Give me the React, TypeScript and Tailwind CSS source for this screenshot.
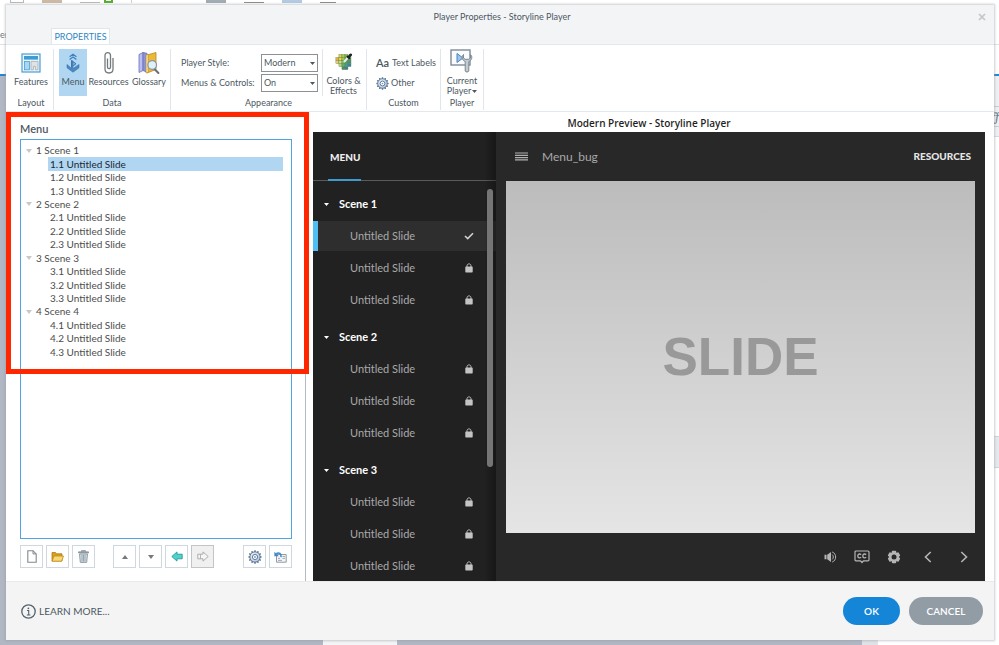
import type { ReactNode } from "react";

const UI = "font-[Lato,'Open_Sans',sans-serif]";

function Gear({ size, id }: { size: number; id: string }) {
  const teeth = Array.from({ length: 12 }, (_, i) => i * 30);
  return (
    <svg width={size} height={size} viewBox="0 0 24 24" aria-hidden="true">
      <defs>
        <linearGradient id={id} x1="0" y1="0" x2="1" y2="1">
          <stop offset="0" stopColor="#eef4fb" />
          <stop offset="1" stopColor="#a9c1de" />
        </linearGradient>
      </defs>
      {teeth.map((a) => (
        <rect key={a} x="10.6" y="0.6" width="2.8" height="4" rx="0.8" fill="#56708f" transform={`rotate(${a} 12 12)`} />
      ))}
      <circle cx="12" cy="12" r="8.8" fill={`url(#${id})`} stroke="#56708f" strokeWidth="1.5" />
      <circle cx="12" cy="12" r="4.4" fill="#fff" stroke="#56708f" strokeWidth="1.6" />
      <circle cx="12" cy="12" r="1.6" fill="#7b98bd" />
    </svg>
  );
}

function FeaturesIcon() {
  return (
    <svg width="20" height="20" viewBox="0 0 20 20" aria-hidden="true">
      <rect x="1" y="1" width="18" height="18" fill="#eaf5fc" stroke="#4a9fd2" strokeWidth="1.2" />
      <rect x="3" y="3" width="14" height="3.6" fill="#3f9bd0" />
      <rect x="3.4" y="8.4" width="5" height="8.4" fill="#a9d6f0" stroke="#4a9fd2" strokeWidth="0.8" />
      <path d="M10 8.4h7v8.4h-2.6v-3.4h-2v3.4H10z" fill="#dfe3e6" stroke="#a5adb3" strokeWidth="0.8" />
    </svg>
  );
}

function MenuIcon() {
  return (
    <svg width="14" height="20" viewBox="0 0 14 20" aria-hidden="true">
      <path d="M3.600 3.800L7 1.200l3.400 2.600M3.600 6.600L7 4l3.400 2.600" fill="none" stroke="#4181bd" strokeWidth="1.300" />
      <path d="M5.500 7.500l4.500 3.300-4.500 3.200z" fill="#8dbbe2" stroke="#3573ae" strokeWidth="1" />
      <path d="M1 11.500l4.500 3.800V8H7v7.500l6-4v3.300L7 19.200 1 14.800z" fill="#4c89c2" stroke="#3573ae" strokeWidth="0.600" />
    </svg>
  );
}

function ClipIcon() {
  return (
    <svg width="10" height="24" viewBox="0 0 10 24" aria-hidden="true">
      <path d="M3.500 7.500v8.500c0 2.200 3 2.200 3 0V4.500c0-3.900-5.500-3.900-5.500 0v13.500c0 5.300 8 5.300 8 0V7" fill="none" stroke="#737a7e" strokeWidth="1.300" />
    </svg>
  );
}

function GlossaryIcon() {
  return (
    <svg width="22" height="24" viewBox="0 0 22 24" aria-hidden="true">
      <path d="M1 3.500L5 1.500v18l-4 2z" fill="#b9bff0" stroke="#6a70b8" strokeWidth="0.8" />
      <path d="M5 1.500l4 .8v19l-4-1.800z" fill="#8b93dc" stroke="#6a70b8" strokeWidth="0.8" />
      <path d="M9 4l9-2.500v17L9 22z" fill="#e9b93a" stroke="#b5851c" strokeWidth="0.8" />
      <path d="M8 4l2.200-.6v18L8 22z" fill="#fbe6a0" stroke="#b5851c" strokeWidth="0.6" />
      <path d="M16 17.500l4.400 4.500" stroke="#6b6f76" strokeWidth="2" strokeLinecap="round" />
      <circle cx="14.200" cy="14" r="4.300" fill="#dff0fb" stroke="#8796a5" strokeWidth="1.200" />
    </svg>
  );
}

function ColorsIcon() {
  const cells = [
    ["", "#e9c93f", "#a8ca4a", "#7cb84a", ""],
    ["#edb23a", "#ead74c", "#9fc84f", "#5ca34a", "#4c9d62"],
    ["#f0c876", "#d9dc69", "#7fbf5a", "#4c9d62", "#3f8f86"],
    ["", "#b9d577", "#63ad6d", "#4a9a93", "#3e82a6"],
    ["", "", "#4a8d6a", "#3e7f9a", ""],
  ];
  return (
    <svg width="18" height="18" viewBox="0 0 18 18" aria-hidden="true">
      {cells.map((row, y) =>
        row.map((c, x) => (c ? <rect key={`${x}-${y}`} x={x * 3.2 + 0.4} y={y * 3.2 + 1.6} width="3.200" height="3.200" fill={c} stroke="#57804a" strokeWidth="0.400" /> : null)),
      )}
      <path d="M9 9.500l4.500-5" stroke="#e8edf0" strokeWidth="2.200" />
      <path d="M12 3.200l3.200 3" stroke="#222" strokeWidth="1.600" />
      <path d="M14 4.400l2-2.400" stroke="#222" strokeWidth="3" strokeLinecap="round" />
    </svg>
  );
}

function PlayerIcon() {
  return (
    <svg width="24" height="24" viewBox="0 0 24 24" aria-hidden="true">
      <rect x="1" y="1" width="19" height="15" fill="#fafbfc" stroke="#7e8c98" strokeWidth="1.400" />
      <path d="M7 4.500v9l6-4.500z" fill="#9cc3ea" stroke="#4b83bd" strokeWidth="1" />
      <path d="M13.500 5.500c-2.200 2-1.600 5.600 1.700 7v9.500c0 1.300 3.600 1.300 3.600 0V12.500c3.300-1.400 3.900-5 1.700-7v3.600l-1.700 1.200h-3.600l-1.700-1.200z" fill="#c3cbd2" stroke="#7b8893" strokeWidth="1" />
    </svg>
  );
}

function Caret({ className }: { className: string }) {
  return (
    <svg className={className} width="5" height="3" viewBox="0 0 5 3" aria-hidden="true">
      <path d="M0 0h5L2.500 3z" fill="currentColor" />
    </svg>
  );
}

function Lock() {
  return (
    <svg width="8" height="10" viewBox="0 0 8 10" aria-hidden="true">
      <path d="M2 4.500V2.700C2 .3 6 .3 6 2.700v1.800" fill="none" stroke="#bdbdbd" strokeWidth="1" />
      <rect x="0.300" y="3.600" width="7.400" height="6" rx="0.800" fill="#c4c4c4" />
    </svg>
  );
}

function Check() {
  return (
    <svg width="10" height="8" viewBox="0 0 10 8" aria-hidden="true">
      <path d="M1 4l2.700 2.600L9 1.200" fill="none" stroke="#d0d0d0" strokeWidth="1.600" />
    </svg>
  );
}

function Group({ label, className, children }: { label: string; className: string; children: ReactNode }) {
  return (
    <section className={`flex shrink-0 flex-col border-r border-[#e1e6ea] ${className}`}>
      <div className="flex h-[47px]">{children}</div>
      <div className="text-center leading-[14px]">{label}</div>
    </section>
  );
}

function RibbonButton({ icon, label, className }: { icon: ReactNode; label: string; className: string }) {
  return (
    <button type="button" className={`flex h-[47px] flex-col items-center pt-[2px] leading-[14px] ${className}`}>
      <span className="flex h-6 items-center">{icon}</span>
      <span className="whitespace-nowrap">{label}</span>
    </button>
  );
}

function Picker({ id, label, value, options }: { id: string; label: string; value: string; options: string[] }) {
  return (
    <div className="flex h-5 items-center">
      <label htmlFor={id} className="w-20 whitespace-nowrap">
        {label}
      </label>
      <div className="relative">
        <select id={id} defaultValue={value} className="block h-[18px] w-[57px] appearance-none border border-[#8b9196] bg-white pl-[2px] leading-4">
          {options.map((o) => (
            <option key={o}>{o}</option>
          ))}
        </select>
        <Caret className="pointer-events-none absolute top-2 right-[3px]" />
      </div>
    </div>
  );
}

function Ribbon() {
  return (
    <div className="flex h-[68px] border-y border-[#e3e8ec] bg-white pt-[4px] pb-px">
      <Group label="Layout" className="w-[48px] pl-[3px]">
        <RibbonButton icon={<FeaturesIcon />} label="Features" className="mx-auto w-[42px]" />
      </Group>
      <Group label="Data" className="w-[117px]">
        <RibbonButton icon={<MenuIcon />} label="Menu" className="ml-[5px] w-7 bg-[#b0d6f1]" />
        <RibbonButton icon={<ClipIcon />} label="Resources" className="w-[43px]" />
        <RibbonButton icon={<GlossaryIcon />} label="Glossary" className="w-[38px]" />
      </Group>
      <Group label="Appearance" className="w-[196px]">
        <div className="ml-[10px] flex flex-col pt-1">
          <Picker id="player-style" label="Player Style:" value="Modern" options={["Modern", "Classic"]} />
          <Picker id="menus-controls" label="Menus &amp; Controls:" value="On" options={["On", "Off"]} />
        </div>
        <button type="button" className="ml-1 flex w-[42px] flex-col items-center border-l border-[#e1e6ea] pt-1 leading-[10px]">
          <ColorsIcon />
          <span className="pt-[6px] whitespace-nowrap">
            Colors &amp;
            <br />
            Effects
          </span>
        </button>
      </Group>
      <Group label="Custom" className="w-[74px]">
        <div className="ml-[9px] flex flex-col pt-1">
          <button type="button" className="flex h-5 items-center gap-[3px] whitespace-nowrap">
            <span className="text-[11px] font-semibold">Aa</span>
            Text Labels
          </button>
          <button type="button" className="flex h-5 items-center gap-[2px]">
            <Gear size={13} id="gear-other" />
            Other
          </button>
        </div>
      </Group>
      <Group label="Player" className="w-[43px]">
        <button type="button" className="mx-auto flex flex-col items-center leading-[10px]">
          <PlayerIcon />
          <span className="pt-[3px]">
            Current
            <br />
            Player
            <Caret className="ml-px inline" />
          </span>
        </button>
      </Group>
    </div>
  );
}

const scenes = [1, 2, 3, 4];

function Tree() {
  return (
    <div className="min-h-0 flex-1 border border-[#4ea6dc] pt-[4px] pr-2 pl-[5px]">
      <ul className="grid h-[215px] auto-rows-fr text-[10px] text-[#4d4d4d]">
        {scenes.flatMap((s) => [
          <li key={s} className="flex items-center">
            <svg className="mr-1" width="6" height="4" viewBox="0 0 6 4" aria-hidden="true">
              <path d="M0 0h6L3 4z" fill="#c8c8c8" />
            </svg>
            {s} Scene {s}
          </li>,
          ...[1, 2, 3].map((n) => (
            <li key={`${s}.${n}`} className={s === 1 && n === 1 ? "ml-[22px] flex items-center bg-[#b0d6f1] pl-[2px] text-[#1c2733]" : "ml-[22px] flex items-center pl-[2px]"}>
              {s}.{n} Untitled Slide
            </li>
          )),
        ])}
      </ul>
    </div>
  );
}

function Tool({ label, disabled, children }: { label: string; disabled?: boolean; children: ReactNode }) {
  return (
    <button
      type="button"
      aria-label={label}
      disabled={disabled}
      className="flex size-[23px] items-center justify-center border border-[#cfd8de] bg-white disabled:border-[#c4c4c4] disabled:bg-[#f0f0f0]"
    >
      {children}
    </button>
  );
}

function Toolbar() {
  return (
    <div className="mt-[6px] flex gap-[3px]">
      <Tool label="New">
        <svg width="10" height="13" viewBox="0 0 10 13">
          <path d="M.8.700h5.200l3.200 3.200v8.400H.8z" fill="#fff" stroke="#83898d" strokeWidth="1.100" />
          <path d="M6 .7v3.200h3.200" fill="none" stroke="#83898d" strokeWidth="1" />
        </svg>
      </Tool>
      <Tool label="Open">
        <svg width="13" height="11" viewBox="0 0 13 11">
          <path d="M1 10V1.500h3.500l1 1.300H11V10z" fill="#d79f22" stroke="#b07b14" strokeWidth="0.800" />
          <path d="M1 10.200L3 5h9.500l-1.800 5.200z" fill="#f8d775" stroke="#c08c1d" strokeWidth="0.800" />
        </svg>
      </Tool>
      <Tool label="Delete">
        <svg width="11" height="13" viewBox="0 0 11 13">
          <path d="M.5 3V1.800h3V.600h4v1.200h3V3z" fill="#9aa6ae" stroke="#75828b" strokeWidth="0.600" />
          <path d="M1.500 4h8l-.8 8.400H2.300z" fill="#d5dee4" stroke="#87959e" strokeWidth="0.900" />
          <path d="M4 5v6.500M5.500 5v6.500M7 5v6.500" stroke="#8c99a2" strokeWidth="0.800" />
        </svg>
      </Tool>
      <div className="w-3" />
      <Tool label="Move up">
        <svg width="6" height="4" viewBox="0 0 6 4">
          <path d="M0 4h6L3 0z" fill="#77787a" />
        </svg>
      </Tool>
      <Tool label="Move down">
        <svg width="6" height="4" viewBox="0 0 6 4">
          <path d="M0 0h6L3 4z" fill="#77787a" />
        </svg>
      </Tool>
      <Tool label="Promote">
        <svg width="12" height="11" viewBox="0 0 12 11">
          <path d="M.8 5.500L6 .9v2.300h5.200v4.600H6v2.300z" fill="#4fd0cb" stroke="#259c9b" strokeWidth="0.900" />
        </svg>
      </Tool>
      <Tool label="Demote" disabled>
        <svg width="12" height="11" viewBox="0 0 12 11">
          <path d="M11.200 5.500L6 .9v2.300H.8v4.600H6v2.300z" fill="#f6f6f6" stroke="#a6a6a6" strokeWidth="0.900" />
          <path d="M3.500 3.200v4.600" stroke="#a6a6a6" strokeWidth="0.800" />
        </svg>
      </Tool>
      <div className="ml-auto flex gap-[3px]">
        <Tool label="Options">
          <Gear size={14} id="gear-tool" />
        </Tool>
        <Tool label="Reset from story">
          <svg width="13" height="12" viewBox="0 0 13 12">
            <path d="M2.500 3.500h9.700v7.700H2.500z" fill="#f3f5f7" stroke="#87919a" strokeWidth="0.900" />
            <path d="M4 9.400h4M8.500 5.500h2.500M8.500 7.400h2.500M4 7.400h2" stroke="#98a2aa" strokeWidth="0.900" />
            <path d="M7 6.200C7.600 2.600 5 1 2.200 2.600" fill="none" stroke="#3c86cc" strokeWidth="1.500" />
            <path d="M.4.700v4.500h4.400z" fill="#3c86cc" />
          </svg>
        </Tool>
      </div>
    </div>
  );
}

function PreviewMenu() {
  return (
    <aside className="relative flex w-[183px] shrink-0 flex-col overflow-hidden bg-[#212121]">
      <div className="h-[49px] shrink-0 border-b border-[#5a5a5a] pl-[15px]">
        <div className="h-[49px] w-[33px] border-b-2 border-[#3d9bd0] text-[10px] leading-[50px] font-black text-[#f0f0f0]">
          <span className="pl-[2px]">MENU</span>
        </div>
      </div>
      <div className="min-h-0 flex-1 overflow-hidden pt-[6px]">
        {[1, 2, 3].map((s) => (
          <section key={s} className="h-[133px]">
            <h3 className="flex h-[34px] items-center pl-[11px] text-[11px] font-bold text-white">
              <Caret className="mr-[10px]" />
              Scene {s}
            </h3>
            <div className="flex flex-col gap-[2px]">
              {[1, 2, 3].map((n) => {
                const on = s === 1 && n === 1;
                return (
                  <button
                    key={n}
                    type="button"
                    className={
                      on
                        ? "flex h-[30px] items-center justify-between border-l-[5px] border-[#4ebef5] bg-[#2e2e2e] pr-[22px] pl-8"
                        : "flex h-[30px] items-center justify-between pr-[23px] pl-[37px]"
                    }
                  >
                    <span className="text-[11px] text-[#a9a9a9]">Untitled Slide</span>
                    {on ? <Check /> : <Lock />}
                  </button>
                );
              })}
            </div>
          </section>
        ))}
      </div>
      <div className="pointer-events-none absolute inset-y-0 right-0 w-3 bg-linear-to-r from-transparent to-black/30" />
      <div className="absolute top-[57px] right-[3px] h-[278px] w-[6px] rounded-full bg-[#757575]" />
    </aside>
  );
}

function PlayerControls() {
  const c = "#b5b5b5";
  return (
    <div className="flex h-[48px] shrink-0 items-center justify-end pr-[3px]">
      <button type="button" aria-label="Volume" className="w-8">
        <svg width="13" height="12" viewBox="0 0 13 12" className="mx-auto">
          <path d="M.5 3.800h2v4.400h-2zM3.200 3.800L7 1v10L3.200 8.200z" fill={c} />
          <path d="M8.200 3.600c1.500 1.200 1.500 3.600 0 4.800M8.200 1c4.600 1.400 4.600 8.600 0 10" fill="none" stroke={c} strokeWidth="1" />
        </svg>
      </button>
      <button type="button" aria-label="Captions" className="w-8">
        <svg width="16" height="14" viewBox="0 0 16 14" className="mx-auto">
          <path d="M2 1h12q1 0 1 1v7.800q0 1-1 1H9.500L8 12.500l-1.500-1.700H2q-1 0-1-1V2q0-1 1-1z" fill="none" stroke={c} strokeWidth="1.200" />
          <path d="M7.200 4.600c-2-1.300-3.400-.3-3.400 1.300s1.400 2.600 3.400 1.300M12.200 4.600c-2-1.300-3.400-.3-3.400 1.300s1.400 2.600 3.400 1.300" fill="none" stroke={c} strokeWidth="1.300" />
        </svg>
      </button>
      <button type="button" aria-label="Settings" className="w-8">
        <svg width="14" height="14" viewBox="0 0 14 14" className="mx-auto">
          {[0, 60, 120].map((a) => (
            <rect key={a} x="4.800" y="0.800" width="4.400" height="12.400" rx="1" fill={c} transform={`rotate(${a} 7 7)`} />
          ))}
          <circle cx="7" cy="7" r="5" fill={c} />
          <circle cx="7" cy="7" r="2.500" fill="#282828" />
        </svg>
      </button>
      <button type="button" aria-label="Previous" className="w-[36px]">
        <svg width="8" height="12" viewBox="0 0 8 12" className="mx-auto">
          <path d="M6.700 1L1.500 6l5.200 5" fill="none" stroke={c} strokeWidth="1.600" />
        </svg>
      </button>
      <button type="button" aria-label="Next" className="w-[36px]">
        <svg width="8" height="12" viewBox="0 0 8 12" className="mx-auto">
          <path d="M1.300 1l5.200 5-5.200 5" fill="none" stroke={c} strokeWidth="1.600" />
        </svg>
      </button>
    </div>
  );
}

function Preview() {
  return (
    <section className="flex min-w-0 flex-1 flex-col pr-[9px] pl-[7px]">
      <h2 className="h-[20px] text-center font-['Open_Sans','Noto_Sans',sans-serif] text-[10px] leading-[23px] font-semibold text-[#1f1f1f]">Modern Preview - Storyline Player</h2>
      <div className="flex min-h-0 flex-1 bg-[#282828] font-[Lato,sans-serif]">
        <PreviewMenu />
        <div className="flex min-w-0 flex-1 flex-col pl-[10px]">
          <div className="flex h-[49px] shrink-0 items-center pr-[14px] pl-[9px]">
            <button type="button" aria-label="Toggle menu">
              <svg width="13" height="9" viewBox="0 0 13 9">
                <path d="M0 1h13M0 3.300h13M0 5.600h13M0 7.900h13" stroke="#b0b0b0" strokeWidth="1.200" />
              </svg>
            </button>
            <span className="pl-[14px] text-[12px] text-[#a9a9a9]">Menu_bug</span>
            <button type="button" className="ml-auto text-[10px] font-black text-[#e6e6e6]">
              RESOURCES
            </button>
          </div>
          <div className="mr-[10px] flex min-h-0 flex-1 items-center justify-center bg-linear-to-b from-[#bcbcbc] to-[#e5e5e5] font-['Liberation_Sans',sans-serif] text-[53px] font-bold text-[#999999]">
            SLIDE
          </div>
          <PlayerControls />
        </div>
      </div>
    </section>
  );
}

function Backdrop() {
  return (
    <div className="absolute inset-0 flex flex-col bg-white text-[#6b7680]" aria-hidden="true">
      <div className="flex h-[3px] gap-[18px] overflow-hidden pl-[10px]">
        <div className="w-[14px] border-x border-b border-[#b9b9b9]" />
        <div className="w-5 bg-[#cdb9a4]" />
        <div className="w-5 border-b border-[#b9b9b9]" />
        <div className="-ml-[14px] w-[9px] border-x-2 border-b-2 border-[#58b030]" />
        <div className="w-px bg-[#d0d0d0]" />
        <div className="ml-14 w-5 bg-[#a3acb2]" />
        <div className="w-5 border-b border-[#8c8c8c]" />
        <div className="w-5 bg-[#b4c9e2]" />
        <div className="w-4 border-b border-[#8c8c8c]" />
      </div>
      <div className="flex h-[42px] items-end border-b border-[#dfe3e6] text-[9px] leading-[18px]">er</div>
      <div className="h-[29px]" />
      <div className="h-[2px] bg-[#2186d4]" />
      <div className="flex flex-1">
        <div className="w-[323px] bg-[#b1b7c3]" />
        <div className="w-[74px] bg-[#f4f5f6]" />
        <div className="w-[465px] bg-[#b1b7c3]" />
        <div className="w-4 bg-[#dfe3e8]" />
        <div className="flex flex-1 flex-col">
          <div className="h-[30px] bg-[#eef0f3]" />
          <div className="h-[21px] border-y border-[#c9cdd2] bg-[#eef0f3] text-right font-serif text-[13px] italic">ff</div>
          <div className="h-[10px] border-b border-[#d5dae0] bg-[#eef0f3]" />
          <div className="mt-[299px] h-8 border-y border-[#cfd5dc] bg-[#e6eaef]" />
        </div>
      </div>
    </div>
  );
}

export default function App() {
  return (
    <main className={`relative h-screen overflow-hidden ${UI} text-[9px] text-[#4c5862]`}>
      <Backdrop />
      <div className="relative flex h-full pt-[5px] pr-[5px] pb-[5px] pl-[6px]">
        <div role="dialog" aria-label="Player Properties" className="relative flex min-w-0 flex-1 flex-col bg-white shadow-[0_0_2px_1px_rgba(150,155,165,0.5)]">
          <header className="flex h-[39px] shrink-0 flex-col bg-[#f3f4f6]">
            <div className="flex h-[23px] items-center">
              <div className="w-5" />
              <h1 className="flex-1 text-center">Player Properties - Storyline Player</h1>
              <button type="button" aria-label="Close" className="flex w-4 items-center">
                <svg width="8" height="8" viewBox="0 0 8 8">
                  <path d="M1 1l6 6M7 1L1 7" stroke="#c3c7ca" strokeWidth="1.700" />
                </svg>
              </button>
            </div>
            <div className="-mb-px flex flex-1">
              <button type="button" className="ml-[45px] w-[59px] border border-b-0 border-[#e0e6ea] bg-white text-center text-[#2e86c1]">
                PROPERTIES
              </button>
            </div>
          </header>
          <Ribbon />
          <div className="flex min-h-0 flex-1">
            <section className="flex w-[300px] shrink-0 flex-col border-r border-[#b4bac1] pr-[13px] pb-[13px] pl-[14px]">
              <h2 className="h-[27px] text-[11px] leading-[34px] font-semibold">Menu</h2>
              <Tree />
              <Toolbar />
            </section>
            <Preview />
          </div>
          <footer className="flex h-[59px] shrink-0 items-center border-t border-[#e8e9ea] bg-[#f4f4f4] pr-[11px] pl-[15px]">
            <a href="#learn" className="flex items-center gap-[3px] text-[10px]">
              <svg width="15" height="15" viewBox="0 0 15 15" aria-hidden="true">
                <circle cx="7.500" cy="7.500" r="6.700" fill="none" stroke="#53636e" strokeWidth="1.300" />
                <circle cx="7.400" cy="4.300" r="0.900" fill="#53636e" />
                <path d="M6 6.500h1.700v4.300M5.800 11h3.600" fill="none" stroke="#53636e" strokeWidth="1.100" />
              </svg>
              LEARN MORE...
            </a>
            <button type="button" className="mr-[9px] ml-auto h-7 w-[57px] rounded-full bg-[#1585d8] text-[10px] font-semibold text-white">
              OK
            </button>
            <button type="button" className="h-7 w-[74px] rounded-full bg-[#919ca5] text-[10px] font-semibold text-white">
              CANCEL
            </button>
          </footer>
          <div className="pointer-events-none absolute top-[107px] left-0 h-[262px] w-[303px] border-[5px] border-[#ff2600]" />
        </div>
      </div>
    </main>
  );
}
